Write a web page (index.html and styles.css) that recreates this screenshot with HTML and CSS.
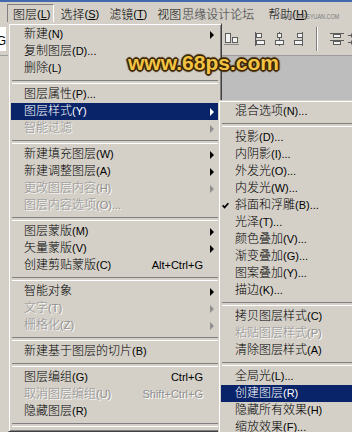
FILE: index.html
```html
<!DOCTYPE html>
<html lang="zh-CN">
<head>
<meta charset="utf-8">
<title>图层菜单</title>
<link rel="stylesheet" href="styles.css">
</head>
<body>
<div class="app">
  <div class="titlebar"></div>
  <div class="menubar">
    <span class="mb-item pressed">图层<span class="m">(<u>L</u>)</span></span>
    <span class="mb-item">选择<span class="m">(<u>S</u>)</span></span>
    <span class="mb-item">滤镜<span class="m">(<u>T</u>)</span></span>
    <span class="mb-item view">视图</span>
    <span class="wm-sy">思缘设计论坛</span>
    <span class="mb-item help">帮助<span class="m">(<u>H</u>)</span></span>
  </div>
  <div class="optionsbar">
    <div class="field"><span>自动选择G</span></div>
    <div class="align-tools">
      <svg class="tool" width="18" height="16" viewBox="0 0 18 16"><rect x="2.5" y="2.5" width="5" height="9" fill="#f2f2f2" stroke="#5c5c5c"/><rect x="9.5" y="6.5" width="5" height="5" fill="#f2f2f2" stroke="#5c5c5c"/><path d="M1 13.5H16" stroke="#8a8a8a"/></svg>
      <svg class="tool gap" width="18" height="16" viewBox="0 0 18 16"><path d="M3.5 1V15" stroke="#5c5c5c"/><rect x="4.5" y="2.5" width="5" height="4" fill="#f2f2f2" stroke="#5c5c5c"/><rect x="4.5" y="9.5" width="8" height="4" fill="#f2f2f2" stroke="#5c5c5c"/></svg>
      <svg class="tool" width="18" height="16" viewBox="0 0 18 16"><path d="M9.5 1V15" stroke="#5c5c5c"/><rect x="7.5" y="2.5" width="4" height="4" fill="#f2f2f2" stroke="#5c5c5c"/><rect x="5.5" y="9.5" width="8" height="4" fill="#f2f2f2" stroke="#5c5c5c"/></svg>
      <svg class="tool" width="18" height="16" viewBox="0 0 18 16"><path d="M14.5 1V15" stroke="#5c5c5c"/><rect x="9.5" y="2.5" width="5" height="4" fill="#f2f2f2" stroke="#5c5c5c"/><rect x="6.5" y="9.5" width="8" height="4" fill="#f2f2f2" stroke="#5c5c5c"/></svg>
      <span class="vsep"></span>
      <svg class="tool" width="18" height="16" viewBox="0 0 18 16"><path d="M2 2.5H16M2 9.5H16" stroke="#5c5c5c"/><rect x="5.5" y="3.5" width="7" height="3" fill="#f2f2f2" stroke="#5c5c5c"/><rect x="5.5" y="10.5" width="7" height="3" fill="#f2f2f2" stroke="#5c5c5c"/></svg>
      <svg class="tool" width="18" height="16" viewBox="0 0 18 16"><path d="M2 4.5H16M2 11.5H16" stroke="#5c5c5c"/><rect x="5.5" y="3" width="7" height="3" fill="#f2f2f2" stroke="#5c5c5c"/><rect x="5.5" y="10" width="7" height="3" fill="#f2f2f2" stroke="#5c5c5c"/></svg>
    </div>
  </div>
  <div class="workarea">
    <div class="leftpanel"></div>
    <div class="canvas"></div>
  </div>
</div>

<div class="menu main-menu">
  <div class="item"><span class="chk"></span><span class="label">新建<span class="m">(N)</span></span><span class="arr"></span></div>
  <div class="item"><span class="chk"></span><span class="label">复制图层<span class="m">(D)...</span></span><span class="noarr"></span></div>
  <div class="item"><span class="chk"></span><span class="label">删除<span class="m">(L)</span></span><span class="noarr"></span></div>
  <div class="sep"></div>
  <div class="item"><span class="chk"></span><span class="label">图层属性<span class="m">(P)...</span></span><span class="noarr"></span></div>
  <div class="item hl"><span class="chk"></span><span class="label">图层样式<span class="m">(Y)</span></span><span class="arr"></span></div>
  <div class="item dis"><span class="chk"></span><span class="label">智能过滤</span><span class="arr"></span></div>
  <div class="sep"></div>
  <div class="item"><span class="chk"></span><span class="label">新建填充图层<span class="m">(W)</span></span><span class="arr"></span></div>
  <div class="item"><span class="chk"></span><span class="label">新建调整图层<span class="m">(A)</span></span><span class="arr"></span></div>
  <div class="item dis"><span class="chk"></span><span class="label">更改图层内容<span class="m">(H)</span></span><span class="arr"></span></div>
  <div class="item dis"><span class="chk"></span><span class="label">图层内容选项<span class="m">(O)...</span></span><span class="noarr"></span></div>
  <div class="sep"></div>
  <div class="item"><span class="chk"></span><span class="label">图层蒙版<span class="m">(M)</span></span><span class="arr"></span></div>
  <div class="item"><span class="chk"></span><span class="label">矢量蒙版<span class="m">(V)</span></span><span class="arr"></span></div>
  <div class="item"><span class="chk"></span><span class="label">创建剪贴蒙版<span class="m">(C)</span></span><span class="key">Alt+Ctrl+G</span><span class="noarr"></span></div>
  <div class="sep"></div>
  <div class="item"><span class="chk"></span><span class="label">智能对象</span><span class="arr"></span></div>
  <div class="item dis"><span class="chk"></span><span class="label">文字<span class="m">(T)</span></span><span class="arr"></span></div>
  <div class="item dis"><span class="chk"></span><span class="label">栅格化<span class="m">(Z)</span></span><span class="arr"></span></div>
  <div class="sep"></div>
  <div class="item"><span class="chk"></span><span class="label">新建基于图层的切片<span class="m">(B)</span></span><span class="noarr"></span></div>
  <div class="sep"></div>
  <div class="item"><span class="chk"></span><span class="label">图层编组<span class="m">(G)</span></span><span class="key">Ctrl+G</span><span class="noarr"></span></div>
  <div class="item dis"><span class="chk"></span><span class="label">取消图层编组<span class="m">(U)</span></span><span class="key">Shift+Ctrl+G</span><span class="noarr"></span></div>
  <div class="item"><span class="chk"></span><span class="label">隐藏图层<span class="m">(R)</span></span><span class="noarr"></span></div>
  <div class="sep"></div>
</div>

<div class="menu sub-menu">
  <div class="item"><span class="chk"></span><span class="label">混合选项<span class="m">(N)...</span></span></div>
  <div class="sep"></div>
  <div class="item"><span class="chk"></span><span class="label">投影<span class="m">(D)...</span></span></div>
  <div class="item"><span class="chk"></span><span class="label">内阴影<span class="m">(I)...</span></span></div>
  <div class="item"><span class="chk"></span><span class="label">外发光<span class="m">(O)...</span></span></div>
  <div class="item"><span class="chk"></span><span class="label">内发光<span class="m">(W)...</span></span></div>
  <div class="item"><span class="chk"><svg width="7" height="7" viewBox="0 0 7 7"><path d="M0.6 3.4 L2.6 5.4 L6.4 1.2" fill="none" stroke="#000" stroke-width="1.7"/></svg></span><span class="label">斜面和浮雕<span class="m">(B)...</span></span></div>
  <div class="item"><span class="chk"></span><span class="label">光泽<span class="m">(T)...</span></span></div>
  <div class="item"><span class="chk"></span><span class="label">颜色叠加<span class="m">(V)...</span></span></div>
  <div class="item"><span class="chk"></span><span class="label">渐变叠加<span class="m">(G)...</span></span></div>
  <div class="item"><span class="chk"></span><span class="label">图案叠加<span class="m">(Y)...</span></span></div>
  <div class="item"><span class="chk"></span><span class="label">描边<span class="m">(K)...</span></span></div>
  <div class="sep"></div>
  <div class="item"><span class="chk"></span><span class="label">拷贝图层样式<span class="m">(C)</span></span></div>
  <div class="item dis"><span class="chk"></span><span class="label">粘贴图层样式<span class="m">(P)</span></span></div>
  <div class="item"><span class="chk"></span><span class="label">清除图层样式<span class="m">(A)</span></span></div>
  <div class="sep"></div>
  <div class="item"><span class="chk"></span><span class="label">全局光<span class="m">(L)...</span></span></div>
  <div class="item hl"><span class="chk"></span><span class="label">创建图层<span class="m">(R)</span></span></div>
  <div class="item"><span class="chk"></span><span class="label">隐藏所有效果<span class="m">(H)</span></span></div>
  <div class="item"><span class="chk"></span><span class="label">缩放效果<span class="m">(F)...</span></span></div>
</div>

<div class="wm-url">WWW.MISSYUAN.COM</div>
<div class="wm68">www.68ps.com</div>
</body>
</html>
```

FILE: styles.css
```css
* { box-sizing: border-box; }
html, body { margin: 0; padding: 0; }
body {
  width: 352px;
  height: 432px;
  overflow: hidden;
  position: relative;
  background: #d4d0c8;
  font-family: "Liberation Sans", "Noto Sans CJK SC", sans-serif;
  font-size: 12px;
  font-weight: 300;
  color: #000;
}
.app { display: flex; flex-direction: column; height: 432px; }
.titlebar { height: 2px; background: #4468ad; flex: none; }

.menubar {
  height: 20px;
  flex: none;
  display: flex;
  padding-left: 7px;
  background: #d4d0c8;
}
.mb-item {
  display: flex;
  align-items: center;
  padding: 0 3px 0 5px;
  margin-top: 2px;
  border: 1px solid transparent;
  border-bottom: 0;
  white-space: nowrap;
}
.mb-item.pressed { border-color: #808080 #ffffff #ffffff #808080; }
.mb-item.view { padding-right: 0; }
.mb-item.help { margin-left: 8px; }
.m { font-size: 11px; font-weight: 400; }

.wm-sy {
  display: flex;
  align-items: center;
  margin-top: 2px;
  color: #4a4a4a;
  font-family: "Noto Sans CJK SC", sans-serif;
  font-size: 12px;
  white-space: nowrap;
  text-shadow: 0 0 1px #9a9a9a;
}
.wm-url {
  position: absolute;
  left: 280px;
  top: 13px;
  font-family: "Liberation Sans", sans-serif;
  font-size: 8px;
  line-height: 8px;
  font-weight: 400;
  color: #7a7a7a;
  white-space: nowrap;
  transform: scaleX(0.68);
  transform-origin: left top;
}

.optionsbar {
  height: 34px;
  flex: none;
  display: flex;
  align-items: center;
  border-bottom: 1px solid #9c9c9c;
}
.field {
  width: 6px;
  height: 24px;
  flex: none;
  overflow: hidden;
  display: flex;
  justify-content: flex-end;
  align-items: flex-end;
  padding-bottom: 3px;
  background: #fff;
  font-size: 12px;
  font-weight: 400;
  white-space: nowrap;
}
.align-tools {
  display: flex;
  align-items: center;
  margin-left: 217px;
  flex: none;
}
.tool { display: block; flex: none; }
.tool.gap { margin-left: 11px; }
.vsep {
  width: 2px;
  height: 24px;
  margin: 0 10px;
  border-left: 1px solid #808080;
  border-right: 1px solid #ffffff;
}

.workarea { flex: 1; display: flex; }
.leftpanel { width: 8px; background: #d4d0c8; }
.canvas { flex: 1; background: #bdbdbd; }

.menu {
  position: absolute;
  background: #d4d0c8;
  border: 1px solid;
  border-color: #d4d0c8 #404040 #404040 #d4d0c8;
  box-shadow: inset 1px 1px #ffffff, inset -1px -1px #808080;
  padding: 2px;
}
.main-menu { left: 8px; top: 23px; width: 214px; }
.sub-menu { left: 218px; top: 100px; width: 160px; }

.item {
  display: flex;
  align-items: center;
  height: 17px;
  line-height: 17px;
  white-space: nowrap;
}
.main-menu .chk { width: 13px; }
.sub-menu .chk { width: 14px; padding-left: 1px; }
.chk { flex: none; display: flex; align-items: center; }
.chk svg { display: block; }
.label { flex: 1; }
.key { font-size: 11px; font-weight: 400; flex: none; }
.arr, .noarr {
  width: 16px;
  flex: none;
  display: flex;
  align-items: center;
  padding-left: 7px;
}
.arr::before {
  content: "";
  width: 0;
  height: 0;
  border-left: 4px solid currentColor;
  border-top: 4px solid transparent;
  border-bottom: 4px solid transparent;
}
.item.hl { background: #0a246a; color: #ffffff; }
.item.dis { color: #8f8f8f; text-shadow: 1px 1px 0 #ffffff; }

.sep { height: 9px; display: flex; align-items: center; padding: 0 1px; }
.sep::before {
  content: "";
  flex: 1;
  height: 2px;
  border-top: 1px solid #808080;
  border-bottom: 1px solid #ffffff;
}

.wm68 {
  position: absolute;
  left: 128px;
  top: 52px;
  font-family: "Liberation Sans", sans-serif;
  font-weight: 700;
  font-size: 21px;
  line-height: 21px;
  color: #f3c444;
  white-space: nowrap;
  text-shadow:
    1px 0 #3a2506, -1px 0 #3a2506, 0 1px #3a2506, 0 -1px #3a2506,
    1px 1px #3a2506, -1px -1px #3a2506, 1px -1px #3a2506, -1px 1px #3a2506,
    2px 0 1px #4a300a, -2px 0 1px #4a300a, 0 2px 1px #4a300a, 0 -2px 1px #4a300a;
}
```
